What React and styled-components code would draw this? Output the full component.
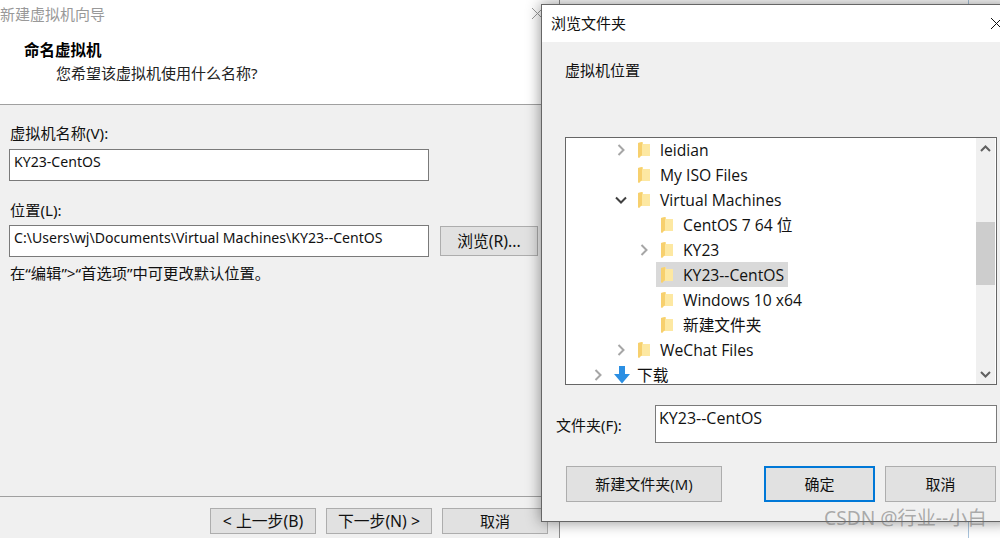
import React from 'react';
import styled, { createGlobalStyle } from 'styled-components';

const UI_FONT = '"Open Sans", "Noto Sans CJK SC", sans-serif';
const NARROW_FONT = '"Noto Sans", "Noto Sans CJK SC", sans-serif';

const GlobalStyle = createGlobalStyle`
  html, body {
    margin: 0;
    padding: 0;
    background: #fff;
    overflow: hidden;
  }
`;

const Desktop = styled.div`
  position: relative;
  width: 1000px;
  height: 538px;
  overflow: hidden;
  background: #fff;
  font-family: ${NARROW_FONT};
  color: #111;
`;

const WizardWindow = styled.div`
  position: absolute;
  left: 0;
  top: 0;
  width: 560px;
  height: 538px;
  box-sizing: border-box;
  display: flex;
  flex-direction: column;
  background: #f0f0f0;
  border-right: 1px solid #8c8c8c;
`;

const BackWindow = styled.div`
  position: absolute;
  left: 560px;
  top: 0;
  width: 408px;
  height: 538px;
  background: #fff;
  border-right: 1px solid #a9c4dc;
`;

const WizardHeader = styled.div`
  height: 105px;
  box-sizing: border-box;
  flex: none;
  background: #fff;
  border-bottom: 1px solid #a0a0a0;
  display: flex;
  flex-direction: column;
`;

const WizardTitleBar = styled.div`
  height: 27px;
  display: flex;
  align-items: center;
  justify-content: space-between;
  font-size: 15px;
  color: #999;
  margin-bottom: 13px;
`;

const CloseIcon = styled.svg`
  width: 13px;
  height: 13px;
  flex: none;
  margin-right: 15px;
`;

const StepTitle = styled.div`
  margin-left: 24px;
  font-size: 15.5px;
  line-height: 20px;
  font-weight: 700;
  color: #000;
`;

const StepSubtitle = styled.div`
  margin-left: 56px;
  margin-top: 3px;
  font-size: 15px;
  line-height: 20px;
  color: #222;
`;

const WizardBody = styled.div`
  flex: 1;
  display: flex;
  flex-direction: column;
  padding: 18px 0 0 9px;
`;

const FieldLabel = styled.div`
  margin-left: 1px;
  font-size: 15.2px;
  line-height: 20px;
  margin-bottom: ${(props) => props.$gap}px;
`;

const FieldRow = styled.div`
  display: flex;
  align-items: center;
  gap: 11px;
  margin-bottom: ${(props) => props.$gap || 0}px;
`;

const TextField = styled.div`
  width: 420px;
  height: 32px;
  box-sizing: border-box;
  background: #fff;
  border: 1px solid #7a7a7a;
  padding: 2px 0 0 4px;
  font-size: 14.1px;
  line-height: 20px;
  white-space: nowrap;
`;

const Hint = styled.div`
  margin-left: 1px;
  font-size: 15.3px;
  line-height: 20px;
  margin-top: 6px;
`;

const WizardFooter = styled.div`
  flex: none;
  height: 42px;
  box-sizing: border-box;
  border-top: 1px solid #a0a0a0;
  padding: 11px 11px 0 0;
  display: flex;
  justify-content: flex-end;
  gap: 10px;
`;

const Button = styled.div`
  width: ${(props) => props.$w}px;
  height: ${(props) => props.$h || 26}px;
  margin-left: ${(props) => props.$ml || 0}px;
  box-sizing: border-box;
  padding-bottom: 2px;
  display: flex;
  align-items: center;
  justify-content: center;
  background: #e1e1e1;
  border: ${(props) => (props.$primary ? '2px solid #0078d7' : '1px solid #adadad')};
  font-size: 15px;
  color: #111;
  white-space: nowrap;
`;

const WizardButton = styled(Button)`
  font-size: 15.8px;
`;

const BrowseDialog = styled.div`
  position: absolute;
  left: 541px;
  top: 4px;
  width: 470px;
  height: 518px;
  box-sizing: border-box;
  display: flex;
  flex-direction: column;
  background: #f0f0f0;
  border: 1px solid #666;
  box-shadow: 0 0 14px rgba(0, 0, 0, 0.45);
  font-family: ${UI_FONT};
`;

const DialogTitleBar = styled.div`
  flex: none;
  height: 37px;
  box-sizing: border-box;
  padding: 0 0 3px 9px;
  background: #fff;
  display: flex;
  align-items: center;
  font-size: 15px;
  position: relative;
  font-family: ${NARROW_FONT};
`;

const DialogClose = styled.svg`
  position: absolute;
  left: 448px;
  top: 12px;
  width: 13px;
  height: 13px;
`;

const DialogBody = styled.div`
  flex: 1;
  padding: 18px 0 0 23px;
  display: flex;
  flex-direction: column;
`;

const DialogCaption = styled.div`
  font-size: 15px;
  line-height: 20px;
  font-family: ${NARROW_FONT};
  margin-bottom: 57px;
`;

const TreeBox = styled.div`
  width: 432px;
  height: 248px;
  box-sizing: border-box;
  display: flex;
  background: #fff;
  border: 1px solid #666;
`;

const TreeList = styled.div`
  flex: 1;
  font-size: 15.7px;
`;

const TreeRow = styled.div`
  height: 25px;
  display: flex;
  align-items: center;
  padding-left: ${(props) => 24 + props.$level * 23}px;

  &:first-child {
    margin-top: -1px;
  }
`;

const Chevron = styled.svg`
  width: 16px;
  height: 16px;
  flex: none;
  margin-right: 4px;
  visibility: ${(props) => (props.$hidden ? 'hidden' : 'visible')};
`;

const TreeItem = styled.div`
  display: flex;
  align-items: center;
  gap: 6px;
  height: 25px;
  padding: 0 4px 0 3px;
  background: ${(props) => (props.$selected ? '#d9d9d9' : 'transparent')};
  white-space: nowrap;
  color: #111;
`;

const ScrollTrack = styled.div`
  width: 19px;
  flex: none;
  margin-right: 1px;
  background: #f0f0f0;
  display: flex;
  flex-direction: column;
`;

const ScrollArrow = styled.svg`
  width: 19px;
  height: 20px;
  flex: none;
`;

const ScrollThumb = styled.div`
  height: 63px;
  flex: none;
  margin-top: 64px;
  margin-bottom: auto;
  background: #cdcdcd;
`;

const FolderRow = styled.div`
  display: flex;
  align-items: center;
  margin-top: 20px;
  height: 38px;
`;

const FolderLabel = styled.div`
  width: 99px;
  margin-left: -9px;
  font-size: 15px;
  font-family: ${NARROW_FONT};
`;

const FolderField = styled.div`
  width: 342px;
  height: 38px;
  box-sizing: border-box;
  background: #fff;
  border: 1px solid #7a7a7a;
  padding: 2px 0 0 3px;
  font-size: 16px;
  line-height: 20px;
`;

const DialogButtons = styled.div`
  display: flex;
  margin: 23px 0 0 1px;
  width: 431px;
`;

const Watermark = styled.div`
  position: absolute;
  left: 824px;
  top: 506px;
  font-size: 19.2px;
  line-height: 24px;
  color: rgba(110, 110, 110, 0.55);
  font-family: ${NARROW_FONT};
  white-space: nowrap;
`;

const IconSvg = styled.svg`
  width: 18px;
  height: 18px;
  flex: none;
`;

const FolderIcon = () => (
  <IconSvg viewBox="0 0 18 18">
    <path d="M2 2 L7 1 L7 3 L14 3 L14 15 L4 15 L3 17 L2 16 Z" fill="#fbe08e" />
    <path d="M7 3 L14 3 L14 15 L6 15 L6 4 Z" fill="#fde8a2" />
    <path d="M2 2 L6 1 L6 14 L3 17 L2 16 Z" fill="#f7d06e" />
  </IconSvg>
);

const DownloadIcon = () => (
  <IconSvg viewBox="0 0 18 18">
    <path d="M6 0 H12 V8 H17 L9 17.5 L1 8 H6 Z" fill="#2b8fe3" />
  </IconSvg>
);

const ChevronIcon = ({ state }) => (
  <Chevron viewBox="0 0 16 16" $hidden={!state}>
    {state === 'open' ? (
      <path d="M3 5.5 L8 10.5 L13 5.5" fill="none" stroke="#404040" strokeWidth="2" />
    ) : (
      <path d="M5.5 3 L10.5 8 L5.5 13" fill="none" stroke="#a6a6a6" strokeWidth="2" />
    )}
  </Chevron>
);

const treeRows = [
  { level: 1, state: 'closed', label: 'leidian' },
  { level: 1, label: 'My ISO Files' },
  { level: 1, state: 'open', label: 'Virtual Machines' },
  { level: 2, label: 'CentOS 7 64 位' },
  { level: 2, state: 'closed', label: 'KY23' },
  { level: 2, label: 'KY23--CentOS', selected: true },
  { level: 2, label: 'Windows 10 x64' },
  { level: 2, label: '新建文件夹' },
  { level: 1, state: 'closed', label: 'WeChat Files' },
  { level: 0, state: 'closed', label: '下载', download: true },
];

export default function App() {
  return (
    <Desktop>
      <GlobalStyle />
      <BackWindow />
      <WizardWindow>
        <WizardHeader>
          <WizardTitleBar>
            新建虚拟机向导
            <CloseIcon viewBox="0 0 13 13">
              <path d="M1 1 L12 12 M12 1 L1 12" stroke="#999" strokeWidth="1" />
            </CloseIcon>
          </WizardTitleBar>
          <StepTitle>命名虚拟机</StepTitle>
          <StepSubtitle>您希望该虚拟机使用什么名称?</StepSubtitle>
        </WizardHeader>
        <WizardBody>
          <FieldLabel $gap={6}>虚拟机名称(V):</FieldLabel>
          <FieldRow $gap={19}>
            <TextField>KY23-CentOS</TextField>
          </FieldRow>
          <FieldLabel $gap={5}>位置(L):</FieldLabel>
          <FieldRow>
            <TextField>C:\Users\wj\Documents\Virtual Machines\KY23--CentOS</TextField>
            <WizardButton $w={98} $h={30}>浏览(R)...</WizardButton>
          </FieldRow>
          <Hint>在“编辑”&gt;“首选项”中可更改默认位置。</Hint>
        </WizardBody>
        <WizardFooter>
          <WizardButton $w={106}>&lt; 上一步(B)</WizardButton>
          <WizardButton $w={106}>下一步(N) &gt;</WizardButton>
          <Button $w={106}>取消</Button>
        </WizardFooter>
      </WizardWindow>
      <BrowseDialog>
        <DialogTitleBar>
          浏览文件夹
          <DialogClose viewBox="0 0 13 13">
            <path d="M1 1 L12 12 M12 1 L1 12" stroke="#111" strokeWidth="1" />
          </DialogClose>
        </DialogTitleBar>
        <DialogBody>
          <DialogCaption>虚拟机位置</DialogCaption>
          <TreeBox>
            <TreeList>
              {treeRows.map((row) => (
                <TreeRow key={row.label} $level={row.level}>
                  <ChevronIcon state={row.state} />
                  <TreeItem $selected={row.selected}>
                    {row.download ? <DownloadIcon /> : <FolderIcon />}
                    {row.label}
                  </TreeItem>
                </TreeRow>
              ))}
            </TreeList>
            <ScrollTrack>
              <ScrollArrow viewBox="0 0 19 20">
                <path d="M5 13 L9.5 8.5 L14 13" fill="none" stroke="#606060" strokeWidth="2" />
              </ScrollArrow>
              <ScrollThumb />
              <ScrollArrow viewBox="0 0 19 20">
                <path d="M5 8 L9.5 12.5 L14 8" fill="none" stroke="#606060" strokeWidth="2" />
              </ScrollArrow>
            </ScrollTrack>
          </TreeBox>
          <FolderRow>
            <FolderLabel>文件夹(F):</FolderLabel>
            <FolderField>KY23--CentOS</FolderField>
          </FolderRow>
          <DialogButtons>
            <Button $w={156} $h={36}>新建文件夹(M)</Button>
            <Button $w={111} $h={36} $ml={42} $primary>确定</Button>
            <Button $w={111} $h={36} $ml={10}>取消</Button>
          </DialogButtons>
        </DialogBody>
      </BrowseDialog>
      <Watermark>CSDN @行业--小白</Watermark>
    </Desktop>
  );
}
